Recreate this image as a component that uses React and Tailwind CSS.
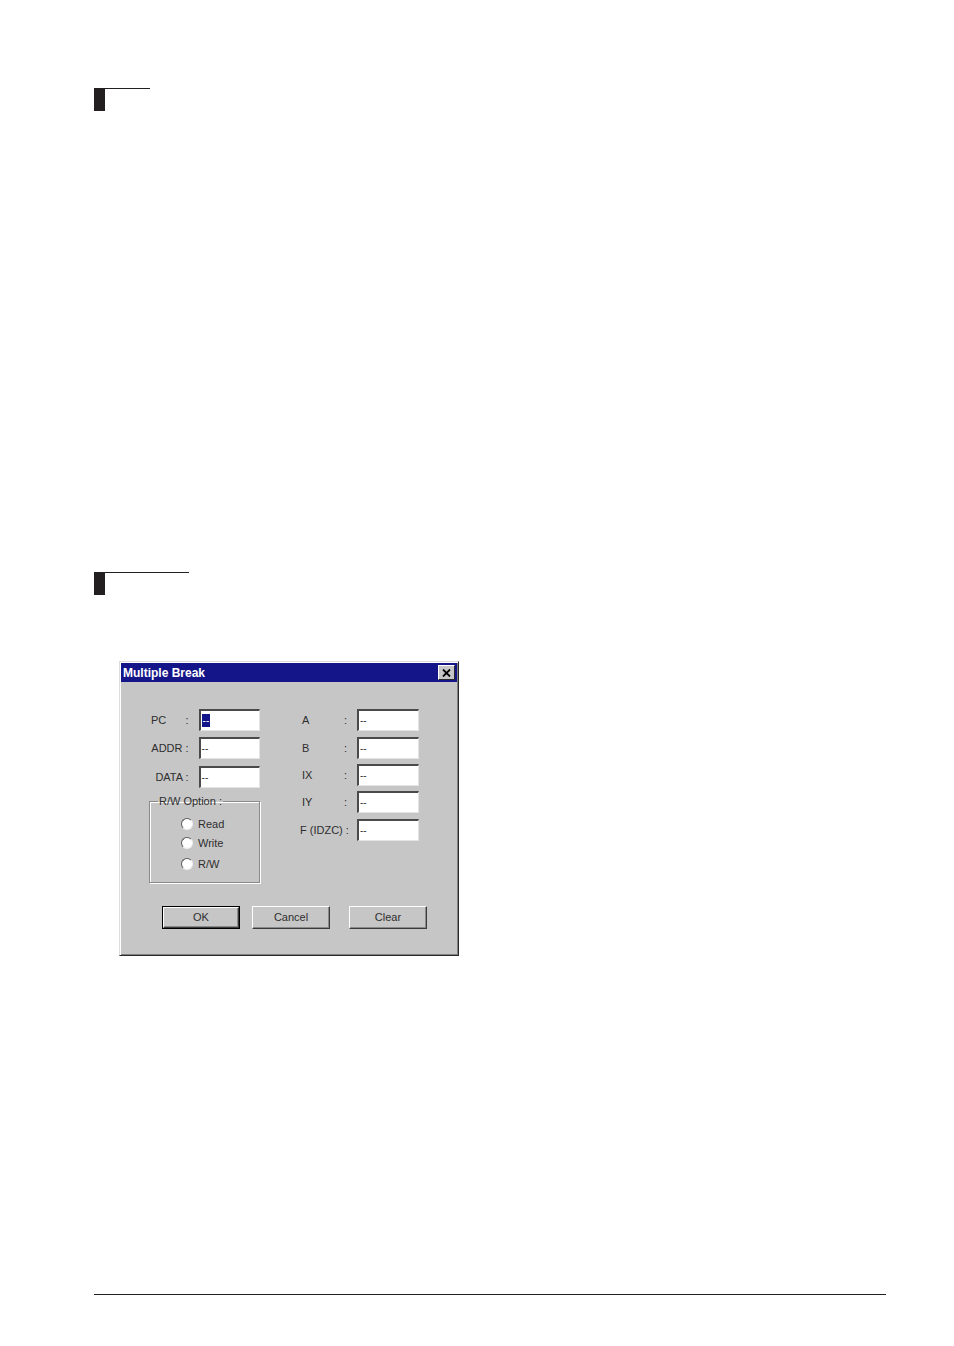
import React from 'react';

const SectionMark = ({ lineClass }) => (
  <div className={lineClass}>
    <div className="w-[11px] h-[22px] bg-[#231f20]"></div>
  </div>
);

const EditBox = ({ selected }) => (
  <div className="w-[62px] h-[22px] bg-white border-t-2 border-l-2 border-t-[#4a4a4a] border-l-[#4a4a4a] border-b border-r border-b-[#e4e4e4] border-r-[#e4e4e4] flex items-center pl-[1px]">
    {selected ? (
      <span className="bg-[#15158a] text-white text-[10px] leading-[13px] px-[1px]">--</span>
    ) : (
      <span className="text-[10px] leading-none text-[#333]">--</span>
    )}
  </div>
);

const Radio = ({ label, className }) => (
  <div className={`flex items-center h-[14px] ${className}`}>
    <div className="w-[12px] h-[12px] rounded-full bg-white border border-t-[#5a5a5a] border-l-[#5a5a5a] border-b-[#efefef] border-r-[#efefef]"></div>
    <span className="ml-[5px]">{label}</span>
  </div>
);

const WinButton = ({ label, isDefault, className }) => (
  <div className={`w-[78px] h-[23px] ${isDefault ? 'border border-black' : ''} ${className}`}>
    <div className="w-full h-full flex items-center justify-center border border-t-white border-l-white border-b-[#3a3a3a] border-r-[#3a3a3a] shadow-[inset_-1px_-1px_0_#8a8a8a]">
      {label}
    </div>
  </div>
);

const App = () => {
  const leftRows = [
    { label: 'ADDR :', mt: 'mt-[6px]' },
    { label: 'DATA :', mt: 'mt-[7px]' },
  ];

  const rightRows = [
    { label: 'A', mt: '' },
    { label: 'B', mt: 'mt-[6px]' },
    { label: 'IX', mt: 'mt-[5px]' },
    { label: 'IY', mt: 'mt-[5px]' },
  ];

  return (
    <div className="min-h-[1346px] w-[954px] bg-white pt-[88px] pl-[94px] font-['Liberation_Sans',Arial,sans-serif]">
      {/* section markers */}
      <SectionMark lineClass="w-[56px] border-t border-[#231f20]" />
      <div className="mt-[461px]">
        <SectionMark lineClass="w-[95px] border-t border-[#231f20]" />
      </div>

      {/* Multiple Break dialog */}
      <div className="ml-[25px] mt-[66px] w-[340px] h-[295px] bg-[#c6c6c6] border border-t-[#dcdcdc] border-l-[#dcdcdc] border-r-[#2a2a2a] border-b-[#2a2a2a] p-[1px] shadow-[inset_1px_1px_0_#fff,inset_-1px_-1px_0_#808080] text-[11px] text-[#2e2e2e]">
        <div className="h-[19px] bg-[#15158a] flex items-center justify-between px-[2px]">
          <span className="text-white text-[12px] font-bold leading-none">Multiple Break</span>
          <div className="w-[17px] h-[15px] bg-[#c6c6c6] border border-t-white border-l-white border-b-[#2a2a2a] border-r-[#2a2a2a] flex items-center justify-center">
            <svg width="9" height="8" viewBox="0 0 9 8">
              <path d="M1 0.5 L8 7.5 M8 0.5 L1 7.5" stroke="#000" strokeWidth="1.8" />
            </svg>
          </div>
        </div>

        <div className="flex pl-[28px] pt-[27px]">
          {/* left column */}
          <div className="w-[111px]">
            <div className="flex items-center h-[22px]">
              <div className="w-[50px] flex justify-between pl-[2px] pr-[10px]">
                <span>PC</span>
                <span>:</span>
              </div>
              <EditBox selected />
            </div>
            {leftRows.map((row) => (
              <div key={row.label} className={`flex items-center h-[22px] ${row.mt}`}>
                <div className="w-[50px] text-right pr-[10px] pl-[2px] whitespace-nowrap">{row.label}</div>
                <EditBox />
              </div>
            ))}
            <fieldset className="mt-[6px] h-[89px] border border-[#8a8a8a] shadow-[inset_1px_1px_0_#fff,1px_1px_0_#fff]">
              <legend className="ml-[8px] px-[1px] leading-[14px]">R/W Option :</legend>
              <div className="pl-[31px]">
                <Radio label="Read" className="mt-[9px]" />
                <Radio label="Write" className="mt-[5px]" />
                <Radio label="R/W" className="mt-[7px]" />
              </div>
            </fieldset>
          </div>

          {/* right column */}
          <div className="ml-[40px]">
            {rightRows.map((row) => (
              <div key={row.label} className={`flex items-center h-[22px] ${row.mt}`}>
                <div className="w-[57px] flex justify-between pl-[2px] pr-[10px]">
                  <span>{row.label}</span>
                  <span>:</span>
                </div>
                <EditBox />
              </div>
            ))}
            <div className="flex items-center h-[22px] mt-[6px]">
              <div className="w-[57px] pr-[9px] text-right whitespace-nowrap">F (IDZC) :</div>
              <EditBox />
            </div>
          </div>
        </div>

        {/* buttons */}
        <div className="flex pl-[41px] mt-[23px]">
          <WinButton label="OK" isDefault />
          <WinButton label="Cancel" className="ml-[12px]" />
          <WinButton label="Clear" className="ml-[19px]" />
        </div>
      </div>

      {/* footer rule */}
      <div className="mt-[338px] w-[792px] h-px bg-[#231f20]"></div>
    </div>
  );
};

export default App;
